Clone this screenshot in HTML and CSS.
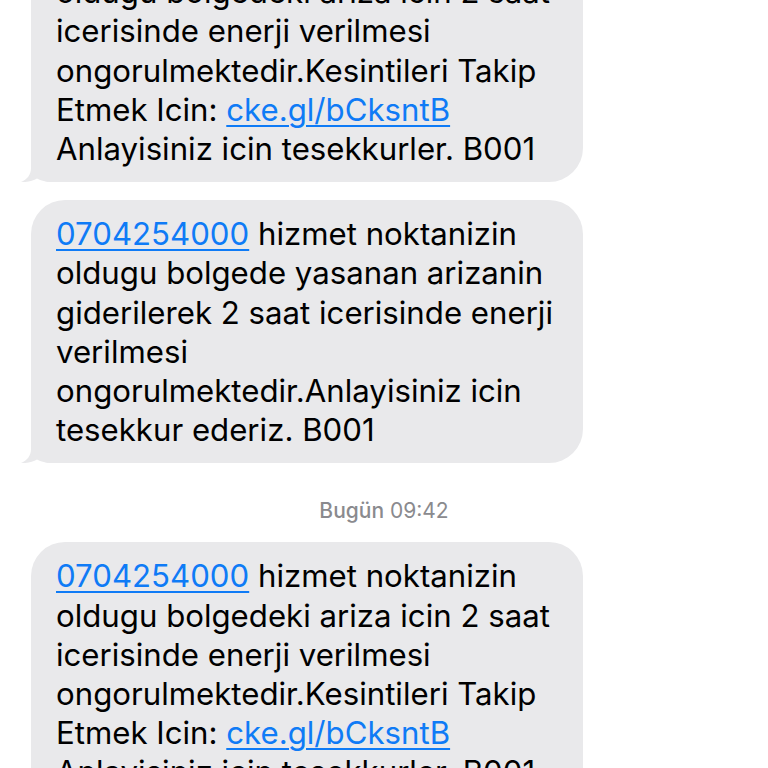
FILE: index.html
```html
<!DOCTYPE html>
<html lang="tr">
<head>
<meta charset="utf-8">
<title>Mesajlar</title>
<link rel="stylesheet" href="styles.css">
</head>
<body>
<div class="thread">
  <div class="bubble">
    <a class="link" href="#">0704254000</a> hizmet noktanizin<br>
    oldugu bolgedeki ariza icin 2 saat<br>
    icerisinde enerji verilmesi<br>
    ongorulmektedir.Kesintileri Takip<br>
    Etmek Icin: <a class="link" href="#">cke.gl/bCksntB</a><br>
    Anlayisiniz icin tesekkurler. B001
    <svg class="tail" width="34" height="32" viewBox="0 0 34 32"><path d="M10,2 L10,18 C10,25 6,29.5 0,32 C6,32.6 12,30.5 16,28.5 C20,30.5 24,32 34,32 L34,2 Z"/></svg>
  </div>
  <div class="bubble">
    <a class="link" href="#">0704254000</a> hizmet noktanizin<br>
    oldugu bolgede yasanan arizanin<br>
    giderilerek 2 saat icerisinde enerji<br>
    verilmesi<br>
    ongorulmektedir.Anlayisiniz icin<br>
    tesekkur ederiz. B001
    <svg class="tail" width="34" height="32" viewBox="0 0 34 32"><path d="M10,2 L10,18 C10,25 6,29.5 0,32 C6,32.6 12,30.5 16,28.5 C20,30.5 24,32 34,32 L34,2 Z"/></svg>
  </div>
  <div class="stamp"><span class="day">Bugün</span> 09:42</div>
  <div class="bubble">
    <a class="link" href="#">0704254000</a> hizmet noktanizin<br>
    oldugu bolgedeki ariza icin 2 saat<br>
    icerisinde enerji verilmesi<br>
    ongorulmektedir.Kesintileri Takip<br>
    Etmek Icin: <a class="link" href="#">cke.gl/bCksntB</a><br>
    Anlayisiniz icin tesekkurler. B001
    <svg class="tail" width="34" height="32" viewBox="0 0 34 32"><path d="M10,2 L10,18 C10,25 6,29.5 0,32 C6,32.6 12,30.5 16,28.5 C20,30.5 24,32 34,32 L34,2 Z"/></svg>
  </div>
</div>
</body>
</html>
```
FILE: styles.css
```css
html, body {
  margin: 0;
  padding: 0;
  background: #ffffff;
  overflow: hidden;
}
body {
  width: 768px;
  height: 768px;
}
.thread {
  display: flex;
  flex-direction: column;
  align-items: flex-start;
  margin-top: -81px;
  padding-left: 31px;
}
.bubble {
  position: relative;
  box-sizing: border-box;
  width: 552px;
  padding: 15px 25px 13px;
  background: #e9e9eb;
  border-radius: 34px;
  border-bottom-left-radius: 20px;
  font-family: Inter, "Noto Sans", sans-serif;
  font-size: 31.2px;
  line-height: 39.2px;
  color: #000000;
  white-space: nowrap;
}
.bubble + .bubble {
  margin-top: 18px;
}
.link {
  color: #0f7bf6;
  text-decoration: underline;
  text-decoration-thickness: 1.5px;
  text-underline-offset: 4px;
}
.tail {
  position: absolute;
  left: -10px;
  bottom: 0;
  fill: #e9e9eb;
}
.stamp {
  align-self: stretch;
  margin: 36px 0 19px -31px;
  text-align: center;
  font-family: Inter, "Noto Sans", sans-serif;
  font-size: 21px;
  line-height: 24px;
  color: #8a8a8e;
}
.day {
  font-weight: 500;
}
```
